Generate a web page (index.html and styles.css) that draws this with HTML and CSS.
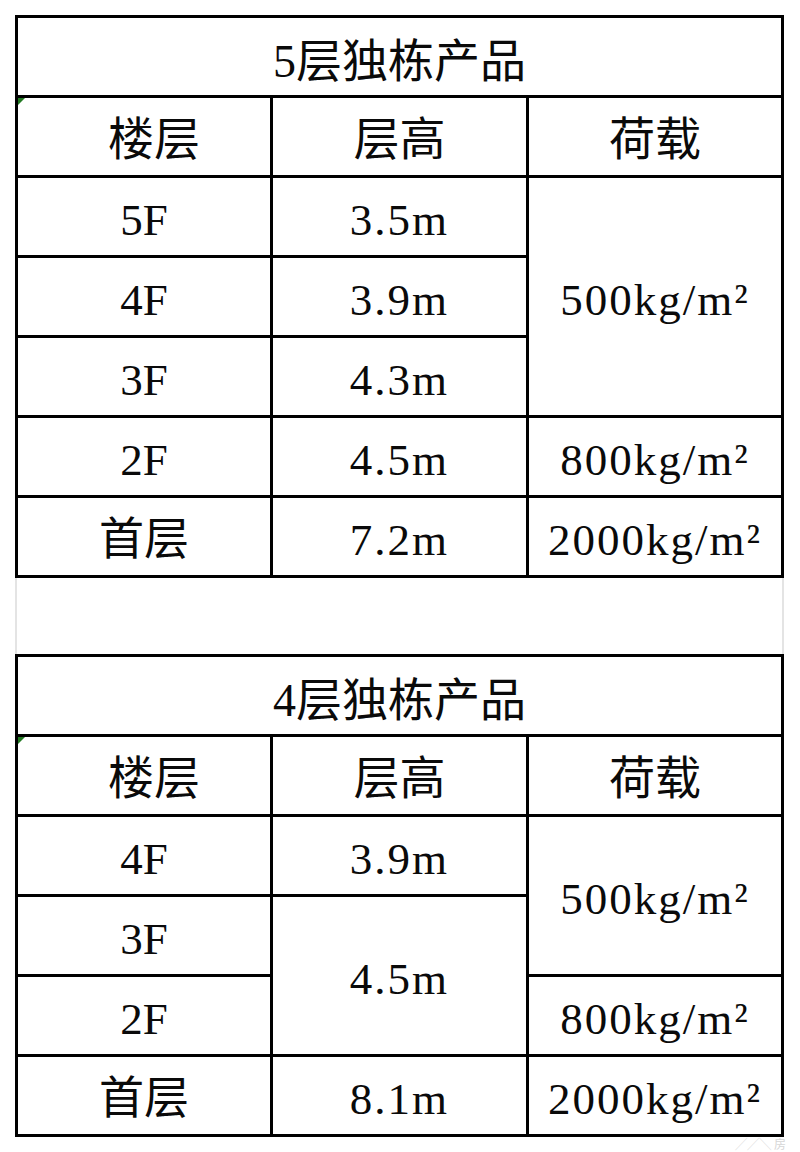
FILE: index.html
```html
<!DOCTYPE html>
<html lang="zh-CN">
<head>
<meta charset="utf-8">
<title>独栋产品</title>
<link rel="stylesheet" href="styles.css">
</head>
<body>
<div class="page">
  <div class="sheet t5">
    <div class="cell title">5层独栋产品</div>
    <div class="cell head first"><span class="mark"></span>楼层</div>
    <div class="cell head">层高</div>
    <div class="cell head">荷载</div>

    <div class="cell">5F</div>
    <div class="cell num">3.5m</div>
    <div class="cell num load r3">500kg/m²</div>

    <div class="cell">4F</div>
    <div class="cell num">3.9m</div>

    <div class="cell">3F</div>
    <div class="cell num">4.3m</div>

    <div class="cell">2F</div>
    <div class="cell num">4.5m</div>
    <div class="cell num load">800kg/m²</div>

    <div class="cell">首层</div>
    <div class="cell num">7.2m</div>
    <div class="cell num load">2000kg/m²</div>
  </div>

  <div class="spacer"></div>

  <div class="sheet t4">
    <div class="cell title">4层独栋产品</div>
    <div class="cell head first"><span class="mark"></span>楼层</div>
    <div class="cell head">层高</div>
    <div class="cell head">荷载</div>

    <div class="cell">4F</div>
    <div class="cell num">3.9m</div>
    <div class="cell num load r2">500kg/m²</div>

    <div class="cell">3F</div>
    <div class="cell num r2">4.5m</div>

    <div class="cell">2F</div>
    <div class="cell num load">800kg/m²</div>

    <div class="cell">首层</div>
    <div class="cell num">8.1m</div>
    <div class="cell num load">2000kg/m²</div>
  </div>

  <div class="watermark">╱╱╲ 房</div>
</div>
</body>
</html>
```

FILE: styles.css
```css
html, body {
  margin: 0;
  padding: 0;
  background: #ffffff;
}

.page {
  position: relative;
  width: 800px;
  height: 1152px;
  padding: 15px 0 0 15px;
  box-sizing: border-box;
  font-family: "Liberation Serif", "Noto Sans CJK SC", serif;
  color: #0a0a0a;
}

.sheet {
  display: grid;
  grid-template-columns: 252px 253px 252px;
  grid-auto-rows: 77px;
  gap: 3px;
  padding: 3px;
  width: 769px;
  box-sizing: border-box;
  background: #000;
}

.cell {
  position: relative;
  background: #fff;
  display: flex;
  align-items: center;
  justify-content: center;
  padding-top: 8px;
  box-sizing: border-box;
  font-size: 45px;
  line-height: 1;
  white-space: nowrap;
}

.title {
  grid-column: 1 / 4;
  padding-top: 10px;
  font-size: 46px;
}

.head {
  padding-top: 6px;
  font-size: 46px;
}

.head.first {
  padding-left: 20px;
}

.num {
  letter-spacing: 2px;
}

.load {
  letter-spacing: 2px;
}

.r3 {
  grid-row: span 3;
}

.r2 {
  grid-row: span 2;
}

.mark {
  position: absolute;
  top: 0;
  left: 0;
  width: 0;
  height: 0;
  border-top: 7px solid #237a23;
  border-right: 7px solid transparent;
}

.spacer {
  width: 769px;
  height: 76px;
  box-sizing: border-box;
  border-left: 2px solid #e4e4e4;
  border-right: 2px solid #e4e4e4;
}

.watermark {
  position: absolute;
  right: 14px;
  bottom: 2px;
  font-family: "Noto Sans CJK SC", sans-serif;
  font-size: 12px;
  line-height: 13px;
  color: #d6d6d6;
}
```
